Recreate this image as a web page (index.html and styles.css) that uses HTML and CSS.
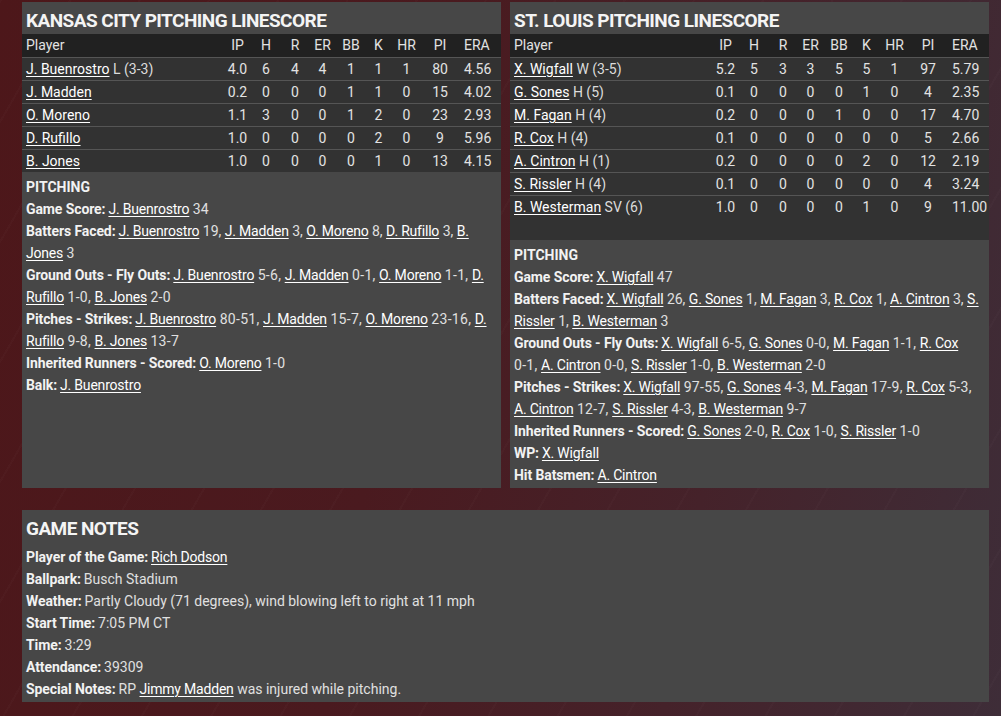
FILE: index.html
```html
<!DOCTYPE html>
<html lang="en">
<head>
<meta charset="utf-8">
<title>Box Score – Pitching</title>
<link rel="stylesheet" href="styles.css">
</head>
<body>
<div class="page">
  <div class="panels">
    <section class="panel">
      <h2 class="panel-title">KANSAS CITY PITCHING LINESCORE</h2>
      <div class="table-wrap">
        <table class="ls">
          <colgroup>
            <col class="c-player"><col class="c-ip"><col class="c-h"><col class="c-r"><col class="c-er"><col class="c-bb"><col class="c-k"><col class="c-hr"><col class="c-pi"><col class="c-era">
          </colgroup>
          <thead>
            <tr><th class="pl">Player</th><th>IP</th><th>H</th><th>R</th><th>ER</th><th>BB</th><th>K</th><th>HR</th><th>PI</th><th class="era">ERA</th></tr>
          </thead>
          <tbody>
            <tr><td class="pl"><a href="#">J. Buenrostro</a> <span class="dec">L (3-3)</span></td><td>4.0</td><td>6</td><td>4</td><td>4</td><td>1</td><td>1</td><td>1</td><td>80</td><td class="era">4.56</td></tr>
            <tr><td class="pl"><a href="#">J. Madden</a></td><td>0.2</td><td>0</td><td>0</td><td>0</td><td>1</td><td>1</td><td>0</td><td>15</td><td class="era">4.02</td></tr>
            <tr><td class="pl"><a href="#">O. Moreno</a></td><td>1.1</td><td>3</td><td>0</td><td>0</td><td>1</td><td>2</td><td>0</td><td>23</td><td class="era">2.93</td></tr>
            <tr><td class="pl"><a href="#">D. Rufillo</a></td><td>1.0</td><td>0</td><td>0</td><td>0</td><td>0</td><td>2</td><td>0</td><td>9</td><td class="era">5.96</td></tr>
            <tr><td class="pl"><a href="#">B. Jones</a></td><td>1.0</td><td>0</td><td>0</td><td>0</td><td>0</td><td>1</td><td>0</td><td>13</td><td class="era">4.15</td></tr>
          </tbody>
        </table>
      </div>
      <div class="notes">
        <div class="line head">PITCHING</div>
        <div class="line"><b>Game Score:</b><a href="#">J. Buenrostro</a> 34</div>
        <div class="line"><b>Batters Faced:</b><a href="#">J. Buenrostro</a> 19, <a href="#">J. Madden</a> 3, <a href="#">O. Moreno</a> 8, <a href="#">D. Rufillo</a> 3, <a href="#">B. Jones</a> 3</div>
        <div class="line"><b>Ground Outs - Fly Outs:</b><a href="#">J. Buenrostro</a> <span class="stat">5-6,</span> <a href="#">J. Madden</a> <span class="stat">0-1,</span> <a href="#">O. Moreno</a> <span class="stat">1-1,</span> <a href="#">D. Rufillo</a> <span class="stat">1-0,</span> <a href="#">B. Jones</a> <span class="stat">2-0</span></div>
        <div class="line"><b>Pitches - Strikes:</b><a href="#">J. Buenrostro</a> <span class="stat">80-51,</span> <a href="#">J. Madden</a> <span class="stat">15-7,</span> <a href="#">O. Moreno</a> <span class="stat">23-16,</span> <a href="#">D. Rufillo</a> <span class="stat">9-8,</span> <a href="#">B. Jones</a> <span class="stat">13-7</span></div>
        <div class="line"><b>Inherited Runners - Scored:</b><a href="#">O. Moreno</a> <span class="stat">1-0</span></div>
        <div class="line"><b>Balk:</b><a href="#">J. Buenrostro</a></div>
      </div>
    </section>

    <section class="panel">
      <h2 class="panel-title">ST. LOUIS PITCHING LINESCORE</h2>
      <div class="table-wrap table-wrap--tall">
        <table class="ls">
          <colgroup>
            <col class="c-player"><col class="c-ip"><col class="c-h"><col class="c-r"><col class="c-er"><col class="c-bb"><col class="c-k"><col class="c-hr"><col class="c-pi"><col class="c-era">
          </colgroup>
          <thead>
            <tr><th class="pl">Player</th><th>IP</th><th>H</th><th>R</th><th>ER</th><th>BB</th><th>K</th><th>HR</th><th>PI</th><th class="era">ERA</th></tr>
          </thead>
          <tbody>
            <tr><td class="pl"><a href="#">X. Wigfall</a> <span class="dec">W (3-5)</span></td><td>5.2</td><td>5</td><td>3</td><td>3</td><td>5</td><td>5</td><td>1</td><td>97</td><td class="era">5.79</td></tr>
            <tr><td class="pl"><a href="#">G. Sones</a> <span class="dec">H (5)</span></td><td>0.1</td><td>0</td><td>0</td><td>0</td><td>0</td><td>1</td><td>0</td><td>4</td><td class="era">2.35</td></tr>
            <tr><td class="pl"><a href="#">M. Fagan</a> <span class="dec">H (4)</span></td><td>0.2</td><td>0</td><td>0</td><td>0</td><td>1</td><td>0</td><td>0</td><td>17</td><td class="era">4.70</td></tr>
            <tr><td class="pl"><a href="#">R. Cox</a> <span class="dec">H (4)</span></td><td>0.1</td><td>0</td><td>0</td><td>0</td><td>0</td><td>0</td><td>0</td><td>5</td><td class="era">2.66</td></tr>
            <tr><td class="pl"><a href="#">A. Cintron</a> <span class="dec">H (1)</span></td><td>0.2</td><td>0</td><td>0</td><td>0</td><td>0</td><td>2</td><td>0</td><td>12</td><td class="era">2.19</td></tr>
            <tr><td class="pl"><a href="#">S. Rissler</a> <span class="dec">H (4)</span></td><td>0.1</td><td>0</td><td>0</td><td>0</td><td>0</td><td>0</td><td>0</td><td>4</td><td class="era">3.24</td></tr>
            <tr><td class="pl"><a href="#">B. Westerman</a> <span class="dec">SV (6)</span></td><td>1.0</td><td>0</td><td>0</td><td>0</td><td>0</td><td>1</td><td>0</td><td>9</td><td class="era">11.00</td></tr>
          </tbody>
        </table>
      </div>
      <div class="notes">
        <div class="line head">PITCHING</div>
        <div class="line"><b>Game Score:</b><a href="#">X. Wigfall</a> 47</div>
        <div class="line"><b>Batters Faced:</b><a href="#">X. Wigfall</a> 26, <a href="#">G. Sones</a> 1, <a href="#">M. Fagan</a> 3, <a href="#">R. Cox</a> 1, <a href="#">A. Cintron</a> 3, <a href="#">S. Rissler</a> 1, <a href="#">B. Westerman</a> 3</div>
        <div class="line"><b>Ground Outs - Fly Outs:</b><a href="#">X. Wigfall</a> <span class="stat">6-5,</span> <a href="#">G. Sones</a> <span class="stat">0-0,</span> <a href="#">M. Fagan</a> <span class="stat">1-1,</span> <a href="#">R. Cox</a> <span class="stat">0-1,</span> <a href="#">A. Cintron</a> <span class="stat">0-0,</span> <a href="#">S. Rissler</a> <span class="stat">1-0,</span> <a href="#">B. Westerman</a> <span class="stat">2-0</span></div>
        <div class="line"><b>Pitches - Strikes:</b><a href="#">X. Wigfall</a> <span class="stat">97-55,</span> <a href="#">G. Sones</a> <span class="stat">4-3,</span> <a href="#">M. Fagan</a> <span class="stat">17-9,</span> <a href="#">R. Cox</a> <span class="stat">5-3,</span> <a href="#">A. Cintron</a> <span class="stat">12-7,</span> <a href="#">S. Rissler</a> <span class="stat">4-3,</span> <a href="#">B. Westerman</a> <span class="stat">9-7</span></div>
        <div class="line"><b>Inherited Runners - Scored:</b><a href="#">G. Sones</a> <span class="stat">2-0,</span> <a href="#">R. Cox</a> <span class="stat">1-0,</span> <a href="#">S. Rissler</a> <span class="stat">1-0</span></div>
        <div class="line"><b>WP:</b><a href="#">X. Wigfall</a></div>
        <div class="line"><b>Hit Batsmen:</b><a href="#">A. Cintron</a></div>
      </div>
    </section>
  </div>

  <section class="panel panel--wide">
    <h2 class="panel-title">GAME NOTES</h2>
    <div class="notes">
      <div class="line"><b>Player of the Game:</b><a href="#">Rich Dodson</a></div>
      <div class="line"><b>Ballpark:</b>Busch Stadium</div>
      <div class="line"><b>Weather:</b>Partly Cloudy (71 degrees), wind blowing left to right at 11 mph</div>
      <div class="line"><b>Start Time:</b>7:05 PM CT</div>
      <div class="line"><b>Time:</b>3:29</div>
      <div class="line"><b>Attendance:</b>39309</div>
      <div class="line"><b>Special Notes:</b>RP <a href="#">Jimmy Madden</a> was injured while pitching.</div>
    </div>
  </section>
</div>
</body>
</html>
```

FILE: styles.css
```css
html, body {
  margin: 0;
  padding: 0;
}

body {
  width: 1001px;
  height: 716px;
  overflow: hidden;
  font-family: Roboto, "Liberation Sans", sans-serif;
  font-size: 14px;
  color: #e2e2e2;
  background-color: #481a1e;
  background-image:
    repeating-linear-gradient(120deg, rgba(255,255,255,0.015) 0 2px, rgba(0,0,0,0) 2px 60px),
    linear-gradient(100deg, #4d171a 0%, #4a1a1f 40%, #45222a 70%, #3e2d38 100%);
}

.page {
  padding: 2px 12px 0 22px;
  display: flex;
  flex-direction: column;
  gap: 22px;
}

.panels {
  display: flex;
  gap: 9px;
  align-items: stretch;
}

.panel {
  width: 479px;
  background: #474747;
  display: flex;
  flex-direction: column;
}

.panel--wide {
  width: 967px;
}

.panel-title {
  margin: 0;
  padding: 4px 4px 0;
  height: 28px;
  line-height: 30px;
  font-size: 19px;
  font-weight: 700;
  color: #f4f4f4;
  letter-spacing: -0.55px;
}

.table-wrap {
  background: #323232;
}

.table-wrap--tall {
  padding-bottom: 22px;
}

.ls {
  width: 479px;
  table-layout: fixed;
  border-collapse: separate;
  border-spacing: 0;
}

.c-player { width: 201px; }
.c-ip { width: 29px; }
.c-h { width: 28px; }
.c-r { width: 30px; }
.c-er { width: 25px; }
.c-bb { width: 32px; }
.c-k { width: 23px; }
.c-hr { width: 33px; }
.c-pi { width: 34px; }
.c-era { width: 44px; }

.ls th,
.ls td {
  padding: 0;
  text-align: center;
  font-weight: 400;
  white-space: nowrap;
  color: #e2e2e2;
}

.ls th {
  line-height: 23px;
  background: #212121;
}

.ls td {
  line-height: 22px;
  border-top: 1px solid #555555;
}

.ls .pl {
  text-align: left;
  padding-left: 4px;
}

.ls .era {
  text-align: left;
  padding-left: 7px;
}

a {
  color: #ffffff;
  text-decoration: underline;
  text-underline-offset: 2px;
}

.dec {
  color: #dcdcdc;
}

.notes {
  padding: 4px 8px 2px 4px;
  flex: 1;
}

.notes a {
  letter-spacing: -0.2px;
}

.line {
  line-height: 22px;
  color: #e0e0e0;
}

.line b {
  font-weight: 700;
  color: #f2f2f2;
  margin-right: 3px;
  letter-spacing: -0.1px;
}

.line.head {
  font-weight: 700;
  color: #f2f2f2;
}

.stat {
  white-space: nowrap;
  letter-spacing: 0.3px;
}
```
